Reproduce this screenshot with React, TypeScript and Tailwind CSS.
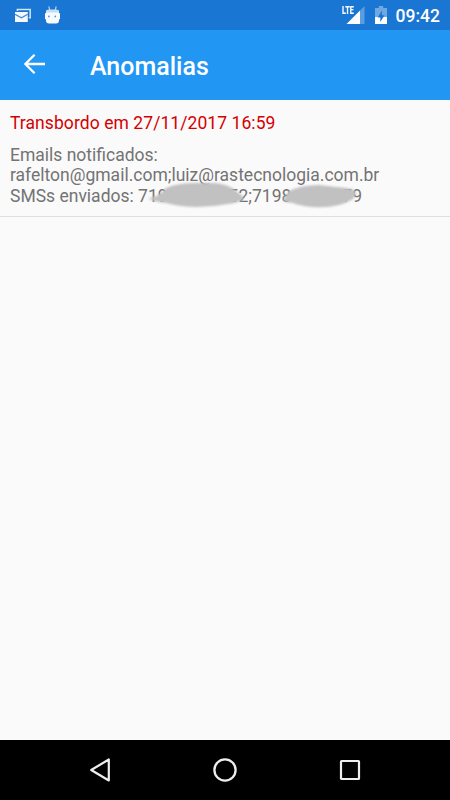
const StatusBar = () => (
  <div className="flex h-[30px] items-center justify-between bg-[#1976d2] pl-[15px] pr-[10px] text-white">
    <div className="flex items-center gap-[14px]">
      {/* Mail notification */}
      <svg width="16" height="14" viewBox="0 0 16 14" aria-hidden="true">
        <path d="M2.4 3V1.6h12.8v8.2h-1.4" fill="none" stroke="#d3e4f6" strokeWidth="1.5" />
        <path d="M0 4h12.8v10H0z" fill="#f4f8fd" />
        <path d="M0 6.2l6.4 3.6 6.4-3.6" fill="none" stroke="#3f8cd9" strokeWidth="1.3" />
      </svg>

      {/* Debug android head */}
      <svg width="15" height="18" viewBox="0 0 15 18" className="-mt-px" aria-hidden="true">
        <path d="M3.8.4l1 3.8M11.2.4l-1 3.8" stroke="#a9ccef" strokeWidth="1.3" />
        <path
          d="M1 5.5Q1 3.8 3 3.8h9q2 0 2 1.7v1.7h1v6h-1v1.4q0 2.9-3 2.9H4Q1 17.5 1 14.6v-1.4H0v-6h1z"
          fill="#f8fbfe"
        />
        <path d="M1 6.6Q1 3.8 4 3.8h7q3 0 3 2.8z" fill="#c6def5" />
        <circle cx="3.9" cy="10.4" r="0.85" fill="#4a92da" />
        <circle cx="10.3" cy="10.4" r="0.85" fill="#4a92da" />
      </svg>
    </div>

    <div className="flex items-center">
      {/* Signal */}
      <div className="relative h-[18px] w-[23px]">
        <svg width="23" height="18" viewBox="0 0 23 18" aria-hidden="true">
          <path d="M22.5 0v18H18V4.5z" fill="#5a9de0" />
          <path d="M18 4.5V18H4.5z" fill="currentColor" />
        </svg>
        <span className="absolute left-0 top-0 origin-left scale-x-[0.66] text-[11px] font-black leading-[9px]">
          LTE
        </span>
      </div>

      {/* Battery */}
      <svg
        width="12"
        height="18"
        viewBox="0 0 12 18"
        className="ml-[10px]"
        aria-hidden="true"
      >
        <path d="M3.8 0h4.4v2H12v9H0V2h3.8z" fill="#70a9e2" />
        <path d="M0 11h12v7H0z" fill="currentColor" />
        <path d="M7 4.5L2.7 11.4h2.6v4.6l4.2-6.8H7z" fill="#1976d2" />
      </svg>
      <span className="ml-[9px] mt-[2px] text-[17.5px] font-medium leading-5">09:42</span>
    </div>
  </div>
);

const AppBar = () => (
  <header className="flex h-[70px] items-center bg-[#2196f3] pl-[24px] text-white">
    <svg width="21" height="20" viewBox="0 0 21 20" className="mb-[2px]" aria-label="Voltar">
      <path
        d="M10.6.8L1.4 10l9.2 9.2M1.4 10H21"
        fill="none"
        stroke="currentColor"
        strokeWidth="2.3"
      />
    </svg>
    <h1 className="ml-[45px] mt-[3px] text-[25px] font-medium leading-8">Anomalias</h1>
  </header>
);

const AnomalyItem = () => (
  <article className="h-[117px] border-b border-[#e0e0e0] px-[10px] pt-[13px] text-[17.5px] leading-[20.5px]">
    <h2 className="tracking-[0.07px] text-[#d50000]">Transbordo em 27/11/2017 16:59</h2>
    <p className="mt-[11px] text-[#737373]">Emails notificados:</p>
    <p className="text-[#737373]">rafelton@gmail.com;luiz@rastecnologia.com.br</p>
    <div className="relative whitespace-nowrap text-[#737373]">
      SMSs enviados: 719
      <span className="inline-block w-[61px]" />
      52;7198
      <span className="inline-block w-[51px]" />
      79
      {/* Phone number masks */}
      <svg
        width="220"
        height="28"
        viewBox="0 0 220 28"
        className="absolute left-[138px] top-[-6px] blur-[0.8px]"
        aria-hidden="true"
      >
        <path
          d="M3 18Q13 15 18 8q12-5 30-5h15q12 0 21 5l8 6q5 3 2 6-5 3-14 4-15 3-31 3-17 0-31-4-13-1-18-5z"
          fill="#c1c1c1"
        />
        <path
          d="M135 20q3-4 6-9 12-6 30-6l17 2q13 1 18 3 4 3-1 9-6 4-14 6-12 3-26 2-13-1-20-4-9-1-10-3z"
          fill="#c1c1c1"
        />
      </svg>
    </div>
  </article>
);

const NavigationBar = () => (
  <nav className="flex h-[60px] items-center justify-between bg-black px-[88px] text-[#eeeeee]">
    <svg width="24" height="26" viewBox="0 0 24 26" aria-label="Voltar">
      <path
        d="M20.8 2.5v21L3.2 13z"
        fill="none"
        stroke="currentColor"
        strokeWidth="2.2"
        strokeLinejoin="round"
      />
    </svg>
    <svg width="26" height="26" viewBox="0 0 26 26" aria-label="Início">
      <circle cx="13" cy="13" r="10.6" fill="none" stroke="currentColor" strokeWidth="2.3" />
    </svg>
    <svg width="24" height="24" viewBox="0 0 24 24" aria-label="Recentes">
      <rect
        x="3"
        y="3"
        width="18"
        height="18"
        rx="0.6"
        fill="none"
        stroke="currentColor"
        strokeWidth="2.2"
      />
    </svg>
  </nav>
);

const App = () => {
  return (
    <div className="flex h-screen w-full flex-col overflow-hidden bg-[#fafafa] font-[Roboto,sans-serif]">
      <StatusBar />
      <AppBar />
      <main className="flex-1">
        <AnomalyItem />
      </main>
      <NavigationBar />
    </div>
  );
};

export default App;
